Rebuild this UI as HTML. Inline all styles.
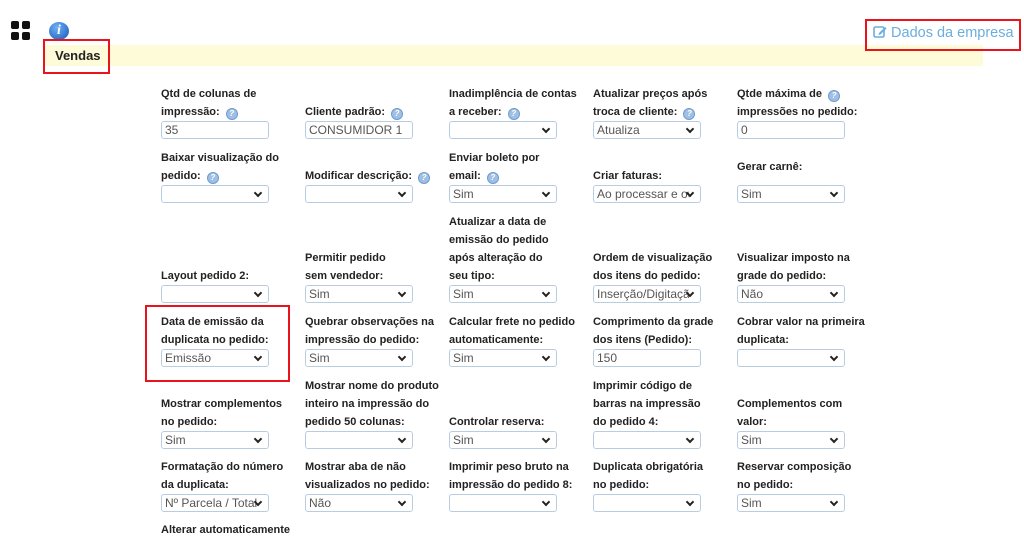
<!DOCTYPE html>
<html><head><meta charset="utf-8"><style>
body{margin:0;width:1024px;height:541px;background:#fff;position:relative;overflow:hidden;font-family:"Liberation Sans",sans-serif}
.c{position:absolute;width:140px;font-size:11px;font-weight:bold;color:#222;line-height:18px;white-space:nowrap}
.l{display:block}
.i{display:block;box-sizing:border-box;width:108px;height:18px;border:1px solid #b9cde2;border-radius:3px;font-weight:normal;color:#555;font-size:12px;line-height:17px;padding-left:3px;position:relative;background:#fff;overflow:hidden}
.s::after{content:"";position:absolute;right:7px;top:4px;width:4px;height:4px;border-right:2px solid #222;border-bottom:2px solid #222;transform:rotate(45deg)}
.s span{display:block;width:92px;overflow:hidden}
.q{display:inline-block;width:10px;height:10px;border-radius:50%;background:#9fc0e4;border:1px solid #6f9ccc;color:#fff;font-size:8px;line-height:10px;text-align:center;vertical-align:-1px;margin-left:3px;box-sizing:content-box}
.red{position:absolute;border:2px solid #e8131b;box-sizing:border-box}
</style></head><body>
<div style="position:absolute;left:11px;top:21px;width:19px;height:19px">
<div style="position:absolute;left:0;top:0;width:8px;height:8px;background:#111;border-radius:2px"></div>
<div style="position:absolute;left:11px;top:0;width:8px;height:8px;background:#111;border-radius:2px"></div>
<div style="position:absolute;left:0;top:11px;width:8px;height:8px;background:#111;border-radius:2px"></div>
<div style="position:absolute;left:11px;top:11px;width:8px;height:8px;background:#111;border-radius:2px"></div>
</div>
<div style="position:absolute;left:49px;top:22px;width:20px;height:18px;border-radius:50%;background:radial-gradient(circle at 40% 30%,#6fb0f5,#1557b8);color:#fff;font:italic bold 14px 'Liberation Serif',serif;text-align:center;line-height:18px">i</div>
<div style="position:absolute;left:43px;top:45px;width:940px;height:21px;background:#fdfbd8"></div>
<div style="position:absolute;left:55px;top:48px;font-size:13px;font-weight:bold;color:#222">Vendas</div>
<div class="red" style="left:43px;top:39px;width:67px;height:35px"></div>
<div class="red" style="left:865px;top:19px;width:156px;height:32px"></div>
<div style="position:absolute;left:873px;top:25px;font-size:14.5px;color:#6aaee0;white-space:nowrap"><svg width="14" height="13" viewBox="0 0 14 13" style="vertical-align:-1px"><rect x="1" y="2" width="10" height="10" rx="1.5" fill="none" stroke="#6aaee0" stroke-width="1.6"/><path d="M6 8 L12 2 L13.5 3.5 L7.5 9.5 L5.5 10 Z" fill="#6aaee0"/></svg> Dados da empresa</div>

<div class="c" style="left:161px;top:85px"><span class="l">Qtd de colunas de</span><span class="l">impressão: <i class="q">?</i></span><span class="i">35</span></div>
<div class="c" style="left:305px;top:103px"><span class="l">Cliente padrão: <i class="q">?</i></span><span class="i">CONSUMIDOR 1</span></div>
<div class="c" style="left:449px;top:85px"><span class="l">Inadimplência de contas</span><span class="l">a receber: <i class="q">?</i></span><span class="i s"></span></div>
<div class="c" style="left:593px;top:85px"><span class="l">Atualizar preços após</span><span class="l">troca de cliente: <i class="q">?</i></span><span class="i s"><span>Atualiza</span></span></div>
<div class="c" style="left:737px;top:85px"><span class="l">Qtde máxima de <i class="q">?</i></span><span class="l">impressões no pedido:</span><span class="i">0</span></div>

<div class="c" style="left:161px;top:149px"><span class="l">Baixar visualização do</span><span class="l">pedido: <i class="q">?</i></span><span class="i s"></span></div>
<div class="c" style="left:305px;top:167px"><span class="l">Modificar descrição: <i class="q">?</i></span><span class="i s"></span></div>
<div class="c" style="left:449px;top:149px"><span class="l">Enviar boleto por</span><span class="l">email: <i class="q">?</i></span><span class="i s"><span>Sim</span></span></div>
<div class="c" style="left:593px;top:167px"><span class="l">Criar faturas:</span><span class="i s"><span>Ao processar e ou</span></span></div>
<div class="c" style="left:737px;top:158px"><span class="l" style="margin-bottom:9px">Gerar carnê:</span><span class="i s"><span>Sim</span></span></div>

<div class="c" style="left:161px;top:267px"><span class="l">Layout pedido 2:</span><span class="i s"></span></div>
<div class="c" style="left:305px;top:249px"><span class="l">Permitir pedido</span><span class="l">sem vendedor:</span><span class="i s"><span>Sim</span></span></div>
<div class="c" style="left:449px;top:213px"><span class="l">Atualizar a data de</span><span class="l">emissão do pedido</span><span class="l">após alteração do</span><span class="l">seu tipo:</span><span class="i s"><span>Sim</span></span></div>
<div class="c" style="left:593px;top:249px"><span class="l">Ordem de visualização</span><span class="l">dos itens do pedido:</span><span class="i s"><span>Inserção/Digitação</span></span></div>
<div class="c" style="left:737px;top:249px"><span class="l">Visualizar imposto na</span><span class="l">grade do pedido:</span><span class="i s"><span>Não</span></span></div>

<div class="c" style="left:161px;top:313px"><span class="l">Data de emissão da</span><span class="l">duplicata no pedido:</span><span class="i s"><span>Emissão</span></span></div>
<div class="c" style="left:305px;top:313px"><span class="l">Quebrar observações na</span><span class="l">impressão do pedido:</span><span class="i s"><span>Sim</span></span></div>
<div class="c" style="left:449px;top:313px"><span class="l">Calcular frete no pedido</span><span class="l">automaticamente:</span><span class="i s"><span>Sim</span></span></div>
<div class="c" style="left:593px;top:313px"><span class="l">Comprimento da grade</span><span class="l">dos itens (Pedido):</span><span class="i">150</span></div>
<div class="c" style="left:737px;top:313px"><span class="l">Cobrar valor na primeira</span><span class="l">duplicata:</span><span class="i s"></span></div>
<div class="red" style="left:145px;top:305px;width:145px;height:77px"></div>

<div class="c" style="left:161px;top:395px"><span class="l">Mostrar complementos</span><span class="l">no pedido:</span><span class="i s"><span>Sim</span></span></div>
<div class="c" style="left:305px;top:377px"><span class="l">Mostrar nome do produto</span><span class="l">inteiro na impressão do</span><span class="l">pedido 50 colunas:</span><span class="i s"></span></div>
<div class="c" style="left:449px;top:413px"><span class="l">Controlar reserva:</span><span class="i s"><span>Sim</span></span></div>
<div class="c" style="left:593px;top:377px"><span class="l">Imprimir código de</span><span class="l">barras na impressão</span><span class="l">do pedido 4:</span><span class="i s"></span></div>
<div class="c" style="left:737px;top:395px"><span class="l">Complementos com</span><span class="l">valor:</span><span class="i s"><span>Sim</span></span></div>

<div class="c" style="left:161px;top:458px"><span class="l">Formatação do número</span><span class="l">da duplicata:</span><span class="i s"><span>Nº Parcela / Total</span></span></div>
<div class="c" style="left:305px;top:458px"><span class="l">Mostrar aba de não</span><span class="l">visualizados no pedido:</span><span class="i s"><span>Não</span></span></div>
<div class="c" style="left:449px;top:458px"><span class="l">Imprimir peso bruto na</span><span class="l">impressão do pedido 8:</span><span class="i s"></span></div>
<div class="c" style="left:593px;top:458px"><span class="l">Duplicata obrigatória</span><span class="l">no pedido:</span><span class="i s"></span></div>
<div class="c" style="left:737px;top:458px"><span class="l">Reservar composição</span><span class="l">no pedido:</span><span class="i s"><span>Sim</span></span></div>
<div class="c" style="left:161px;top:521px"><span class="l">Alterar automaticamente</span></div>
</body></html>
